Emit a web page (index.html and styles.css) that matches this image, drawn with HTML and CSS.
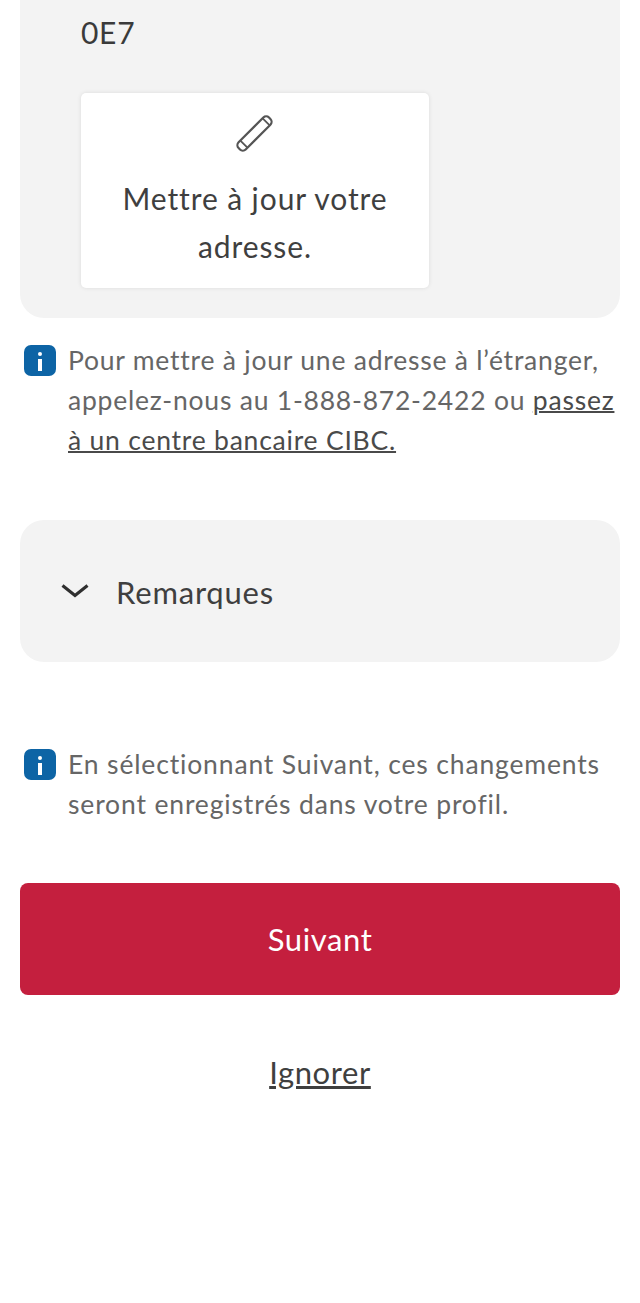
FILE: index.html
```html
<!DOCTYPE html>
<html lang="fr">
<head>
<meta charset="utf-8">
<title>Adresse</title>
<link rel="stylesheet" href="styles.css">
</head>
<body>
<main class="page">
  <section class="card address">
    <p class="postal">0E7</p>
    <button class="update" type="button">
      <svg class="pencil" viewBox="0 0 40 40" width="40" height="40" aria-hidden="true">
        <g transform="rotate(-45 19.5 20.5)" fill="none" stroke="#555">
          <rect x="-2" y="15.5" width="43" height="10" rx="4" stroke-width="2.2"/>
          <path d="M4.5 15.5v10M36 15.5v10" stroke-width="1.8"/>
        </g>
      </svg>
      <span class="update-label">Mettre à jour votre adresse.</span>
    </button>
  </section>

  <div class="note note-first">
    <span class="info" aria-hidden="true"><span class="info-dot"></span><span class="info-bar"></span></span>
    <p>Pour mettre à jour une adresse à l’étranger, appelez-nous au 1-888-872-2422 ou <a href="#">passez à un centre bancaire CIBC.</a></p>
  </div>

  <section class="card remarks">
    <svg class="chevron" viewBox="0 0 30 18" width="30" height="18" aria-hidden="true">
      <path d="M2.5 3.5 15 13.5 27.5 3.5" fill="none" stroke="#2f2f2f" stroke-width="3.2"/>
    </svg>
    <span class="remarks-label">Remarques</span>
  </section>

  <div class="note note-second">
    <span class="info" aria-hidden="true"><span class="info-dot"></span><span class="info-bar"></span></span>
    <p>En sélectionnant Suivant, ces changements seront enregistrés dans votre profil.</p>
  </div>

  <button class="primary" type="button">Suivant</button>
  <a class="skip" href="#">Ignorer</a>
</main>
</body>
</html>
```

FILE: styles.css
```css
* { box-sizing: border-box; }
html, body { margin: 0; padding: 0; background: #fff; }
body {
  font-family: "Lato", "Liberation Sans", sans-serif;
  font-weight: 400;
  color: #444;
  height: 1303px;
  overflow: hidden;
}
.page { display: flex; flex-direction: column; padding: 0 20px; }
.card { background: #f3f3f3; }
.address {
  height: 318px;
  padding: 12px 60px 0 61px;
  border-radius: 0 0 24px 24px;
}
.postal { margin: 0 0 41px; font-size: 30px; line-height: 40px; letter-spacing: 0.7px; color: #3a3a3a; }
.update {
  display: flex;
  flex-direction: column;
  align-items: center;
  width: 348px;
  height: 195px;
  padding: 20px 30px 0;
  border: 0;
  border-radius: 5px;
  background: #fff;
  box-shadow: 0 0 4px rgba(0, 0, 0, 0.1);
  font: inherit;
  color: #3f3f3f;
}
.pencil { display: block; flex: none; }
.update-label { margin-top: 21px; font-size: 30px; line-height: 48px; letter-spacing: 0.9px; text-align: center; }
.note { display: flex; gap: 12px; padding: 0 0 0 4px; font-size: 26.5px; line-height: 40px; letter-spacing: 0.78px; color: #666; }
.note p { margin: 0; }
.note a { color: #4a4a4a; text-decoration: underline; text-decoration-thickness: 2px; }
.note-first { margin-top: 22px; }
.note-second { margin-top: 82px; letter-spacing: 0.85px; }
.info {
  flex: none;
  display: flex;
  flex-direction: column;
  align-items: center;
  width: 32px;
  height: 31px;
  margin-top: 5px;
  padding-top: 7px;
  gap: 3px;
  border-radius: 7px;
  background: #0d64a5;
}
.info-dot { width: 4px; height: 4px; border-radius: 50%; background: #fff; }
.info-bar { width: 4px; height: 12px; background: #fff; }
.remarks {
  display: flex;
  align-items: center;
  gap: 26px;
  height: 142px;
  margin-top: 60px;
  padding-left: 40px;
  border-radius: 24px;
}
.remarks-label { padding-top: 2px; font-size: 31px; letter-spacing: 0.8px; color: #3f3f3f; }
.primary {
  height: 112px;
  margin-top: 59px;
  border: 0;
  border-radius: 8px;
  background: #c41f3e;
  color: #fff;
  font: inherit;
  font-size: 31px;
  letter-spacing: 0.6px;
}
.skip {
  align-self: center;
  margin-top: 57px;
  font-size: 31px;
  line-height: 40px;
  letter-spacing: 0.6px;
  color: #3f3f3f;
  text-decoration: underline;
}
```
